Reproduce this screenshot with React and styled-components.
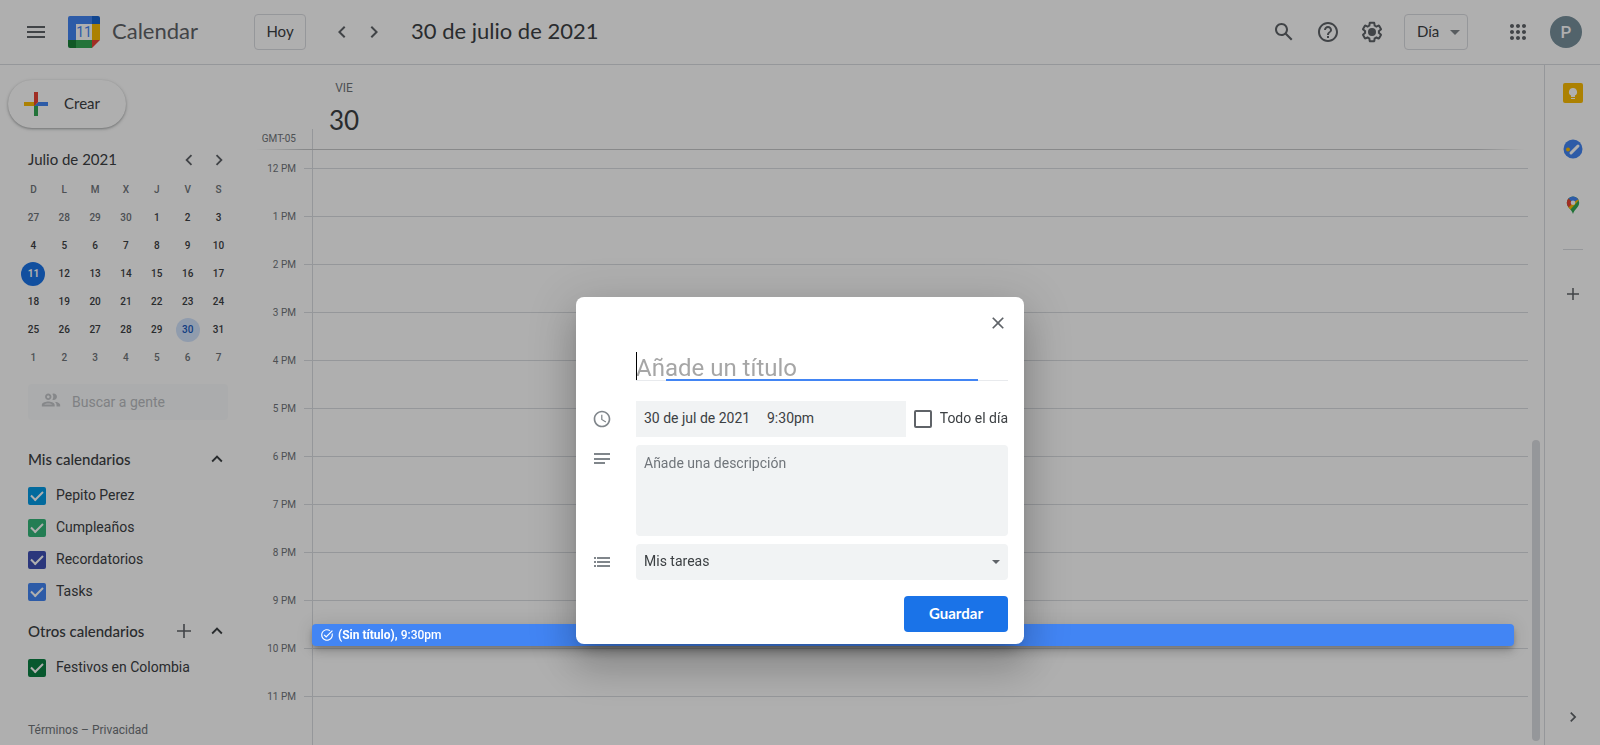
import React from "react";
import styled, { createGlobalStyle } from "styled-components";

const BRAND = `Lato, "Open Sans", sans-serif`;
const BODY = `Roboto, "Liberation Sans", sans-serif`;

const GlobalStyle = createGlobalStyle`
  *, *::before, *::after { box-sizing: border-box; }
  html, body { margin: 0; height: 100%; background: #fff; overflow: hidden; }
  #root { height: 100%; }
  body { font-family: ${BODY}; color: #3c4043; font-size: 14px; line-height: 20px; }
  button, input, textarea, select { font: inherit; color: inherit; }
  button { border: 0; background: none; padding: 0; cursor: pointer; }
`;

const Page = styled.div`
  display: flex;
  flex-direction: column;
  height: 100vh;
`;

const TopBar = styled.header`
  display: flex;
  align-items: center;
  flex: none;
  height: 65px;
  padding: 0 18px 1px 24px;
  border-bottom: 1px solid #dadce0;
  font-family: ${BRAND};
`;

const IconButton = styled.button`
  display: flex;
  align-items: center;
  justify-content: center;
  flex: none;
  width: ${(p) => p.$size || 24}px;
  height: ${(p) => p.$size || 24}px;
  color: ${(p) => p.$color || "#5f6368"};
`;

const Brand = styled.a`
  display: flex;
  align-items: center;
  gap: 12px;
  width: 186px;
  margin-left: 20px;
  color: #5f6368;
  font-size: 22px;
  line-height: 28px;
  text-decoration: none;
  span { padding-bottom: 2px; }
`;

const OutlineButton = styled.button`
  width: 52px;
  height: 36px;
  padding-bottom: 2px;
  border: 1px solid #dadce0;
  border-radius: 4px;
  font-size: 15px;
  font-family: ${BRAND};
  color: #3c4043;
`;

const Pager = styled.nav`
  display: flex;
  gap: ${(p) => p.$gap}px;
  margin-left: ${(p) => p.$left || 0}px;
`;

const DateTitle = styled.h1`
  flex: 1;
  margin: 0 0 0 25px;
  padding-bottom: 2px;
  font-size: 22px;
  line-height: 28px;
  font-weight: 400;
`;

const Tools = styled.div`
  display: flex;
  align-items: center;
  gap: 20px;
`;

const AppsSlot = styled.div`
  display: flex;
  align-items: center;
  gap: 20px;
  margin-left: 18px;
`;

const SelectWrap = styled.div`
  position: relative;
  flex: ${(p) => (p.$grow ? 1 : "none")};
  color: ${(p) => p.$arrow};
  svg {
    position: absolute;
    right: 8px;
    top: 50%;
    margin-top: -2px;
    pointer-events: none;
  }
`;

const ViewSelect = styled.select`
  display: block;
  width: 64px;
  height: 36px;
  padding: 0 0 2px 12px;
  border: 1px solid #dadce0;
  border-radius: 4px;
  background: transparent;
  color: #3c4043;
  font-family: ${BRAND};
  font-size: 15px;
  appearance: none;
`;

const Avatar = styled.button`
  width: 32px;
  height: 32px;
  border-radius: 50%;
  background: #78909c;
  color: #fff;
  font-family: ${BODY};
  font-size: 17px;
  font-weight: 500;
`;

const Columns = styled.div`
  display: flex;
  flex: 1;
  min-height: 0;
`;

const Sidebar = styled.aside`
  display: flex;
  flex-direction: column;
  flex: none;
  width: 256px;
  padding: 15px 27px 5px 28px;
`;

const CreateButton = styled.button`
  display: flex;
  align-items: center;
  flex: none;
  gap: 10px;
  width: 118px;
  height: 48px;
  margin-left: -20px;
  padding-left: 10px;
  border-radius: 24px;
  font-family: ${BRAND};
  font-size: 15px;
  box-shadow: 0 1px 2px 0 rgba(60, 64, 67, 0.3), 0 1px 3px 1px rgba(60, 64, 67, 0.15);
  svg { flex: none; }
  span { padding-bottom: 2px; }
`;

const SectionHead = styled.div`
  display: flex;
  align-items: center;
  flex: none;
  gap: 9px;
  height: 32px;
  margin-top: ${(p) => p.$top}px;
  margin-right: ${(p) => p.$outset || 0}px;
`;

const SectionTitle = styled.h2`
  flex: 1;
  margin: 0;
  padding-bottom: ${(p) => (p.$strong ? 0 : 2)}px;
  font-family: ${BRAND};
  font-size: 15px;
  line-height: 20px;
  font-weight: ${(p) => (p.$strong ? 500 : 400)};
  white-space: nowrap;
`;

const MonthTable = styled.table`
  width: 216px;
  margin: 0 0 0 -10px;
  flex: none;
  border-collapse: collapse;
  table-layout: fixed;
  font-size: 10px;
  line-height: 24px;
  text-align: center;
  th, td { height: 28px; padding: 2px 0; }
  th { color: #70757a; font-weight: 500; }
`;

const DayButton = styled.button`
  display: block;
  width: 24px;
  height: 24px;
  margin: 0 auto;
  border-radius: 50%;
  font-size: 10px;
  line-height: 24px;
  font-weight: ${(p) => (p.$kind === "today" ? 700 : 500)};
  background: ${(p) => ({ today: "#1a73e8", picked: "#d2e3fc" })[p.$kind] || "transparent"};
  color: ${(p) => ({ today: "#fff", picked: "#185abc", out: "#70757a" })[p.$kind] || "#3c4043"};
`;

const PeopleSearch = styled.label`
  display: flex;
  align-items: center;
  flex: none;
  gap: 10px;
  width: 200px;
  height: 36px;
  margin-top: 12px;
  padding: 0 8px 0 12px;
  border-radius: 4px;
  background: #fafbfc;
  color: #c4c6ca;
  svg { margin-top: -4px; flex: none; }
  input {
    width: 100%;
    min-width: 0;
    border: 0;
    padding: 0;
    background: transparent;
    outline: 0;
  }
  input::placeholder { color: #b9bcc0; opacity: 1; }
`;

const CalendarList = styled.ul`
  flex: none;
  margin: 5px 0 0;
  padding: 0;
  list-style: none;
`;

const CalendarRow = styled.label`
  display: flex;
  align-items: center;
  gap: 10px;
  height: 32px;
  span { margin-top: -2px; }
`;

const Check = styled.input`
  appearance: none;
  flex: none;
  width: 18px;
  height: 18px;
  margin: 0;
  border: 2px solid ${(p) => p.$color};
  border-radius: 2px;
  background: ${(p) => (p.$empty ? "transparent" : p.$color)};
  &:checked::after {
    content: "";
    display: block;
    width: 12px;
    height: 7px;
    margin: 2px 0 0 1px;
    border: solid #fff;
    border-width: 0 0 2px 2px;
    transform: rotate(-45deg);
  }
`;

const Legal = styled.footer`
  margin-top: auto;
  font-size: 12px;
  line-height: 20px;
  color: #70757a;
  a { color: inherit; text-decoration: none; }
`;

const DayView = styled.main`
  display: flex;
  flex-direction: column;
  flex: 1;
  min-width: 0;
`;

const DayHead = styled.div`
  display: flex;
  flex: none;
  height: 84px;
`;

const Zone = styled.div`
  display: flex;
  align-items: flex-end;
  justify-content: flex-end;
  width: 56px;
  padding-right: 16px;
  font-size: 10px;
  line-height: 20px;
  color: #70757a;
`;

const DayName = styled.div`
  width: 62px;
  padding-top: 13px;
  text-align: center;
  font-size: 12px;
  line-height: 20px;
  color: #70757a;
  strong {
    display: block;
    margin-top: 4px;
    font-family: ${BRAND};
    font-size: 26px;
    line-height: 36px;
    font-weight: 400;
    color: #3c4043;
  }
`;

const Tick = styled.div`
  align-self: flex-end;
  width: 1px;
  height: 20px;
  background: #dadce0;
`;

const HeadRule = styled.div`
  flex: none;
  height: 1px;
  margin-right: 20px;
  background: linear-gradient(to right, transparent, #c6c8ca 48px, #c6c8ca calc(100% - 48px), transparent);
`;

const GridArea = styled.div`
  display: flex;
  flex: 1;
  min-height: 0;
  overflow: hidden;
`;

const HourLabels = styled.div`
  flex: none;
  width: 40px;
  padding-top: 9px;
  font-size: 10px;
  line-height: 20px;
  text-align: right;
  color: #70757a;
  div { height: 48px; }
`;

const Lanes = styled.div`
  flex: 1;
  min-width: 0;
  display: flex;
  padding-left: 8px;
`;

const Stubs = styled.div`
  width: 8px;
  padding-top: 18px;
`;

const Lane = styled.div`
  position: relative;
  flex: 1;
  border-left: 1px solid #dadce0;
  padding-top: 18px;
`;

const HourSlot = styled.div`
  height: 48px;
  border-top: 1px solid #dadce0;
`;

const TaskChip = styled.button`
  position: absolute;
  z-index: 2;
  left: -1px;
  right: 14px;
  top: 474px;
  height: 22px;
  display: flex;
  align-items: center;
  gap: 4px;
  padding: 0 8px;
  border-radius: 4px;
  background: #4285f4;
  color: #fff;
  font-size: 12px;
  font-weight: 500;
  line-height: 16px;
  box-shadow: 0 6px 10px 0 rgba(0, 0, 0, 0.14), 0 1px 18px 0 rgba(0, 0, 0, 0.12), 0 3px 5px -1px rgba(0, 0, 0, 0.2);
  b { font-weight: 700; }
`;

const ScrollTrack = styled.div`
  display: flex;
  flex-direction: column;
  justify-content: flex-end;
  flex: none;
  width: 16px;
  padding: 0 4px 4px;
`;

const ScrollThumb = styled.div`
  height: 51%;
  border-radius: 4px;
  background: #dadce0;
`;

const AddOns = styled.aside`
  display: flex;
  flex-direction: column;
  align-items: center;
  flex: none;
  gap: 36px;
  width: 56px;
  padding: 18px 0;
  border-left: 1px solid #dadce0;
  > :last-child { margin-top: auto; }
`;

const AddOnRule = styled.hr`
  width: 20px;
  height: 1px;
  margin: -2px 0;
  border: 0;
  background: #dadce0;
`;

const Scrim = styled.div`
  position: fixed;
  inset: 0;
  z-index: 1;
  background: rgba(0, 0, 0, 0.315);
`;

const DialogLayer = styled.div`
  position: fixed;
  inset: 0;
  z-index: 3;
  display: flex;
  justify-content: center;
  align-items: flex-start;
  padding-top: 297px;
`;

const Dialog = styled.form`
  display: flex;
  flex-direction: column;
  gap: 8px;
  width: 448px;
  padding: 16px 16px 12px;
  border-radius: 8px;
  background: #fff;
  box-shadow: 0 24px 38px 3px rgba(0, 0, 0, 0.14), 0 9px 46px 8px rgba(0, 0, 0, 0.12),
    0 11px 15px -7px rgba(0, 0, 0, 0.2);
`;

const CloseRow = styled.div`
  display: flex;
  justify-content: flex-end;
  height: 31px;
`;

const TitleField = styled.div`
  position: relative;
  height: 29px;
  margin: 0 0 12px 44px;
  border-bottom: 1px solid #e8eaed;
  &::before {
    content: "";
    position: absolute;
    left: 0;
    top: 0;
    width: 1px;
    height: 28px;
    background: #000;
  }
  &::after {
    content: "";
    position: absolute;
    left: 8%;
    right: 8%;
    bottom: -1px;
    height: 2px;
    background: #4285f4;
  }
  input {
    display: block;
    width: 100%;
    height: 29px;
    padding: 2px 0 0;
    border: 0;
    outline: 0;
    background: transparent;
    font-size: 24px;
    line-height: 28px;
  }
  input::placeholder { color: #a6a6a6; opacity: 1; }
`;

const FieldRow = styled.div`
  display: flex;
  align-items: ${(p) => (p.$top ? "flex-start" : "center")};
  gap: 24px;
  > svg { flex: none; width: 20px; color: #80868b; ${(p) => p.$top && "margin-top: 4px;"} }
`;

const FieldBody = styled.div`
  display: flex;
  align-items: center;
  flex: 1;
  min-width: 0;
`;

const WhenBox = styled.div`
  display: flex;
  flex: 1;
  height: 36px;
  padding-left: 8px;
  gap: 18px;
  background: #f1f3f4;
  input {
    width: 105px;
    padding: 0 0 2px;
    border: 0;
    background: transparent;
    outline: 0;
  }
`;

const AllDay = styled.label`
  display: flex;
  align-items: center;
  gap: 8px;
  margin-left: 8px;
  span { padding-bottom: 2px; }
`;

const Description = styled.textarea`
  flex: 1;
  display: block;
  min-width: 0;
  height: 91px;
  padding: 8px;
  border: 0;
  border-radius: 4px;
  outline: 0;
  resize: none;
  background: #f1f3f4;
  &::placeholder { color: #70757a; opacity: 1; }
`;

const ListSelect = styled.select`
  display: block;
  width: 100%;
  height: 36px;
  padding: 0 8px 2px;
  border: 0;
  border-radius: 4px;
  background: #f1f3f4;
  color: #3c4043;
  appearance: none;
`;

const SaveButton = styled.button`
  align-self: flex-end;
  width: 104px;
  height: 36px;
  margin-top: 8px;
  padding-bottom: 2px;
  border-radius: 4px;
  background: #1a73e8;
  color: #fff;
  font-family: ${BRAND};
  font-size: 15px;
  font-weight: 700;
`;

const Glyph = ({ d, size = 24 }) => (
  <svg width={size} height={size} viewBox="0 0 24 24" fill="currentColor" aria-hidden="true">
    <path d={d} />
  </svg>
);

const Arrow = ({ size }) => (
  <svg width={size} height={size / 2} viewBox="0 0 10 5" fill="currentColor" aria-hidden="true">
    <path d="M0 0h10L5 5z" />
  </svg>
);

const PATHS = {
  menu: "M3 18h18v-2H3v2zm0-5h18v-2H3v2zm0-7v2h18V6H3z",
  left: "M15.41 7.41L14 6l-6 6 6 6 1.41-1.41L10.83 12z",
  right: "M10 6L8.59 7.41 13.17 12l-4.58 4.59L10 18l6-6z",
  up: "M12 8l-6 6 1.41 1.41L12 10.83l4.59 4.58L18 14z",
  search:
    "M20.49 19l-5.73-5.73C15.53 12.2 16 10.91 16 9.5 16 5.91 13.09 3 9.5 3S3 5.91 3 9.5 5.91 16 9.5 16c1.41 0 2.7-.47 3.77-1.24L19 20.49 20.49 19zM5 9.5C5 7.01 7.01 5 9.5 5S14 7.01 14 9.5 11.99 14 9.5 14 5 11.99 5 9.5z",
  help: "M11 18h2v-2h-2v2zm1-16C6.48 2 2 6.48 2 12s4.48 10 10 10 10-4.48 10-10S17.52 2 12 2zm0 18c-4.41 0-8-3.59-8-8s3.59-8 8-8 8 3.59 8 8-3.59 8-8 8zm0-14c-2.21 0-4 1.79-4 4h2c0-1.1.9-2 2-2s2 .9 2 2c0 2-3 1.75-3 5h2c0-2.25 3-2.5 3-5 0-2.21-1.79-4-4-4z",
  apps: "M6 8c1.1 0 2-.9 2-2s-.9-2-2-2-2 .9-2 2 .9 2 2 2zm6 12c1.1 0 2-.9 2-2s-.9-2-2-2-2 .9-2 2 .9 2 2 2zm-6 0c1.1 0 2-.9 2-2s-.9-2-2-2-2 .9-2 2 .9 2 2 2zm0-6c1.1 0 2-.9 2-2s-.9-2-2-2-2 .9-2 2 .9 2 2 2zm6 0c1.1 0 2-.9 2-2s-.9-2-2-2-2 .9-2 2 .9 2 2 2zm4-8c0 1.1.9 2 2 2s2-.9 2-2-.9-2-2-2-2 .9-2 2zm-4 2c1.1 0 2-.9 2-2s-.9-2-2-2-2 .9-2 2 .9 2 2 2zm6 6c1.1 0 2-.9 2-2s-.9-2-2-2-2 .9-2 2 .9 2 2 2zm0 6c1.1 0 2-.9 2-2s-.9-2-2-2-2 .9-2 2 .9 2 2 2z",
  people:
    "M9 13.75c-2.34 0-7 1.17-7 3.5V19h14v-1.75c0-2.33-4.66-3.5-7-3.5zM4.34 17c.84-.58 2.87-1.25 4.66-1.25s3.82.67 4.66 1.25H4.34zM9 12c1.93 0 3.5-1.57 3.5-3.5S10.93 5 9 5 5.5 6.57 5.5 8.5 7.07 12 9 12zm0-5c.83 0 1.5.67 1.5 1.5S9.83 10 9 10s-1.5-.67-1.5-1.5S8.17 7 9 7zm7.04 6.81c1.16.84 1.96 1.96 1.96 3.44V19h4v-1.75c0-2.02-3.5-3.17-5.96-3.44zM15 12c1.93 0 3.5-1.57 3.5-3.5S16.93 5 15 5c-.54 0-1.04.13-1.5.35.63.89 1 1.98 1 3.15s-.37 2.26-1 3.15c.46.22.96.35 1.5.35z",
  plus: "M20 13h-7v7h-2v-7H4v-2h7V4h2v7h7v2z",
  thinPlus: "M19 12.8h-6.2V19h-1.6v-6.2H5v-1.6h6.2V5h1.6v6.2H19z",
  close: "M19 6.41L17.59 5 12 10.59 6.41 5 5 6.41 10.59 12 5 17.59 6.41 19 12 13.41 17.59 19 19 17.59 13.41 12z",
  clock:
    "M11.99 2C6.47 2 2 6.48 2 12s4.47 10 9.99 10C17.52 22 22 17.52 22 12S17.52 2 11.99 2zM12 20c-4.42 0-8-3.58-8-8s3.58-8 8-8 8 3.58 8 8-3.58 8-8 8zm.5-13H11v6l5.25 3.15.75-1.23-4.5-2.67z",
  doneRing:
    "M22 5.18L10.59 16.6l-4.24-4.24 1.41-1.41 2.83 2.83 10-10L22 5.18zm-2.21 5.04c.13.57.21 1.17.21 1.78 0 4.42-3.58 8-8 8s-8-3.58-8-8 3.58-8 8-8c1.58 0 3.04.46 4.28 1.25l1.44-1.44C16.1 2.67 14.13 2 12 2 6.48 2 2 6.48 2 12s4.48 10 10 10 10-4.48 10-10c0-1.19-.22-2.33-.6-3.39l-1.61 1.61z",
  gear: "M13.85 22.25h-3.7c-.74 0-1.36-.54-1.45-1.27l-.27-1.89c-.27-.14-.53-.29-.79-.46l-1.8.72c-.7.26-1.47-.03-1.81-.65L2.2 15.53c-.35-.66-.2-1.44.36-1.88l1.53-1.19c-.01-.15-.02-.3-.02-.46 0-.15.01-.31.02-.46l-1.52-1.19c-.59-.45-.74-1.26-.37-1.88l1.85-3.19c.34-.62 1.11-.9 1.79-.63l1.81.73c.26-.17.52-.32.78-.46l.27-1.91c.09-.7.71-1.25 1.44-1.25h3.7c.74 0 1.36.54 1.45 1.27l.27 1.89c.27.14.53.29.79.46l1.8-.72c.71-.26 1.48.03 1.82.65l1.84 3.18c.36.66.2 1.44-.36 1.88l-1.52 1.19c.01.15.02.3.02.46s-.01.31-.02.46l1.52 1.19c.56.45.72 1.23.37 1.86l-1.86 3.22c-.34.62-1.11.9-1.8.63l-1.8-.72c-.26.17-.52.32-.78.46l-.27 1.91c-.1.68-.72 1.22-1.46 1.22zm-3.23-2h2.76l.37-2.55.53-.22c.44-.18.88-.44 1.34-.78l.45-.34 2.38.96 1.38-2.4-2.03-1.58.07-.56c.03-.26.06-.51.06-.78s-.03-.53-.06-.78l-.07-.56 2.03-1.58-1.39-2.4-2.39.96-.45-.35c-.42-.32-.87-.58-1.33-.77l-.52-.22-.37-2.55h-2.76l-.37 2.55-.53.21c-.44.19-.88.44-1.34.79l-.45.33-2.38-.95-1.39 2.39 2.03 1.58-.07.56a7 7 0 0 0-.06.79c0 .26.02.53.06.78l.07.56-2.03 1.58 1.38 2.4 2.39-.96.45.35c.43.33.86.58 1.33.77l.53.22.38 2.55z M12 8a4 4 0 1 0 0 8 4 4 0 0 0 0-8z",
};

const CalendarLogo = () => (
  <svg width="32" height="32" viewBox="0 0 32 32" aria-hidden="true">
    <path d="M2 0h22v8H8v16H0V2a2 2 0 0 1 2-2z" fill="#4285f4" />
    <path d="M24 0h6a2 2 0 0 1 2 2v6h-8z" fill="#1967d2" />
    <path d="M24 8h8v16h-8z" fill="#fbbc04" />
    <path d="M8 24h16v8H8z" fill="#34a853" />
    <path d="M0 24h8v8H2a2 2 0 0 1-2-2z" fill="#188038" />
    <path d="M24 24h8l-8 8z" fill="#ea4335" />
    <path d="M8 8h16v16H8z" fill="#fff" />
    <text x="16" y="21" textAnchor="middle" fontFamily="Roboto, sans-serif" fontSize="14" fill="#4285f4">
      11
    </text>
  </svg>
);

const CreateIcon = () => (
  <svg width="36" height="36" viewBox="0 0 36 36" aria-hidden="true">
    <path fill="#34a853" d="M16 16v14h4V20z" />
    <path fill="#4285f4" d="M30 16H20l-4 4h14z" />
    <path fill="#fbbc05" d="M6 16v4h10l4-4z" />
    <path fill="#ea4335" d="M20 16V6h-4v14z" />
  </svg>
);

const KeepIcon = () => (
  <svg width="20" height="20" viewBox="0 0 20 20" aria-hidden="true">
    <rect width="20" height="20" rx="2" fill="#fbbc04" />
    <path d="M10 5a4 4 0 0 0-2 7.5V14h4v-1.5A4 4 0 0 0 10 5z" fill="#fff" />
    <path d="M8 15h4v1H8z" fill="#fff" />
  </svg>
);

const TasksIcon = () => (
  <svg width="20" height="20" viewBox="0 0 20 20" aria-hidden="true">
    <circle cx="10" cy="10" r="9.5" fill="#4285f4" />
    <path d="M8 14l7-7" stroke="#fff" strokeWidth="3" strokeLinecap="round" />
    <circle cx="5" cy="10.5" r="2" fill="#fbbc04" />
  </svg>
);

const MapsIcon = () => (
  <svg width="20" height="20" viewBox="0 0 20 20" aria-hidden="true">
    <clipPath id="pin">
      <path d="M10 1.500a6.200 6.200 0 0 0-6.200 6.200c0 4.500 4.700 6.200 6.200 11.300 1.500-5.100 6.200-6.800 6.200-11.300A6.200 6.200 0 0 0 10 1.500z" />
    </clipPath>
    <g clipPath="url(#pin)">
      <path d="M0 0h20v20H0z" fill="#34a853" />
      <path d="M17 0L3 13l4 2 10-11z" fill="#fbbc04" />
      <path d="M6 0h12v4l-4 1-4 3-5-5z" fill="#4285f4" />
      <path d="M10 8L5 3 2 4v5l3 4z" fill="#ea4335" />
    </g>
    <circle cx="10" cy="7.700" r="2.300" fill="#fff" />
  </svg>
);

const NotesIcon = () => (
  <svg width="20" height="20" viewBox="0 0 20 20" fill="currentColor" aria-hidden="true">
    <path d="M2 4h16v2H2zM2 9h16v2H2zM2 13h11v2H2z" />
  </svg>
);

const ListIcon = () => (
  <svg width="20" height="20" viewBox="0 0 20 20" fill="currentColor" aria-hidden="true">
    <path d="M2 5h2v2H2zM5 5h13v2H5zM2 9h2v2H2zM5 9h13v2H5zM2 13h2v2H2zM5 13h13v2H5z" />
  </svg>
);

const WEEKDAYS = ["D", "L", "M", "X", "J", "V", "S"];
const DAYS = [27, 28, 29, 30, ...Array.from({ length: 31 }, (_, i) => i + 1), 1, 2, 3, 4, 5, 6, 7];
const WEEKS = Array.from({ length: 6 }, (_, w) => DAYS.slice(w * 7, w * 7 + 7));
const HOURS = ["12 PM", ...Array.from({ length: 11 }, (_, i) => `${i + 1} PM`)];
const MINE = [
  ["Pepito Perez", "#039be5"],
  ["Cumpleaños", "#33b679"],
  ["Recordatorios", "#3f51b5"],
  ["Tasks", "#4285f4"],
];
const OTHERS = [["Festivos en Colombia", "#0b8043"]];

const dayKind = (index) => {
  if (index < 4 || index > 34) return "out";
  if (index === 14) return "today";
  if (index === 33) return "picked";
  return "in";
};

const Calendars = ({ items }) => (
  <CalendarList>
    {items.map(([name, color]) => (
      <li key={name}>
        <CalendarRow>
          <Check type="checkbox" defaultChecked $color={color} />
          <span>{name}</span>
        </CalendarRow>
      </li>
    ))}
  </CalendarList>
);

export default function App() {
  return (
    <Page>
      <GlobalStyle />
      <TopBar>
        <IconButton aria-label="Menú principal"><Glyph d={PATHS.menu} /></IconButton>
        <Brand href="#"><CalendarLogo /><span>Calendar</span></Brand>
        <OutlineButton>Hoy</OutlineButton>
        <Pager $gap={8} $left={24}>
          <IconButton aria-label="Día anterior"><Glyph d={PATHS.left} /></IconButton>
          <IconButton aria-label="Día siguiente"><Glyph d={PATHS.right} /></IconButton>
        </Pager>
        <DateTitle>30 de julio de 2021</DateTitle>
        <Tools>
          <IconButton aria-label="Buscar"><Glyph d={PATHS.search} /></IconButton>
          <IconButton aria-label="Ayuda"><Glyph d={PATHS.help} /></IconButton>
          <IconButton aria-label="Configuración"><Glyph d={PATHS.gear} /></IconButton>
          <SelectWrap $arrow="#80868b">
            <ViewSelect aria-label="Vista" defaultValue="dia">
              <option value="dia">Día</option>
            </ViewSelect>
            <Arrow size={10} />
          </SelectWrap>
          <AppsSlot>
            <IconButton aria-label="Aplicaciones"><Glyph d={PATHS.apps} /></IconButton>
            <Avatar aria-label="Cuenta">P</Avatar>
          </AppsSlot>
        </Tools>
      </TopBar>

      <Columns>
        <Sidebar>
          <CreateButton><CreateIcon /><span>Crear</span></CreateButton>
          <SectionHead $top={16} $outset={-2}>
            <SectionTitle>Julio de 2021</SectionTitle>
            <Pager $gap={6}>
              <IconButton aria-label="Mes anterior"><Glyph d={PATHS.left} size={22} /></IconButton>
              <IconButton aria-label="Mes siguiente"><Glyph d={PATHS.right} size={22} /></IconButton>
            </Pager>
          </SectionHead>
          <MonthTable>
            <thead>
              <tr>{WEEKDAYS.map((d) => <th key={d}>{d}</th>)}</tr>
            </thead>
            <tbody>
              {WEEKS.map((week, w) => (
                <tr key={w}>
                  {week.map((day, i) => (
                    <td key={i}><DayButton $kind={dayKind(w * 7 + i)}>{day}</DayButton></td>
                  ))}
                </tr>
              ))}
            </tbody>
          </MonthTable>
          <PeopleSearch>
            <Glyph d={PATHS.people} size={22} />
            <input aria-label="Buscar a gente" placeholder="Buscar a gente" />
          </PeopleSearch>
          <SectionHead $top={23}>
            <SectionTitle $strong>Mis calendarios</SectionTitle>
            <IconButton $color="#3c4043" aria-label="Contraer mis calendarios"><Glyph d={PATHS.up} size={22} /></IconButton>
          </SectionHead>
          <Calendars items={MINE} />
          <SectionHead $top={7}>
            <SectionTitle $strong>Otros calendarios</SectionTitle>
            <IconButton aria-label="Añadir otros calendarios"><Glyph d={PATHS.thinPlus} /></IconButton>
            <IconButton $color="#3c4043" aria-label="Contraer otros calendarios"><Glyph d={PATHS.up} size={22} /></IconButton>
          </SectionHead>
          <Calendars items={OTHERS} />
          <Legal><a href="#">Términos</a> – <a href="#">Privacidad</a></Legal>
        </Sidebar>

        <DayView>
          <DayHead>
            <Zone>GMT-05</Zone>
            <Tick />
            <DayName>VIE<strong>30</strong></DayName>
          </DayHead>
          <HeadRule />
          <GridArea>
            <HourLabels>{HOURS.map((h) => <div key={h}>{h}</div>)}</HourLabels>
            <Lanes>
              <Stubs>{HOURS.map((h) => <HourSlot key={h} />)}</Stubs>
              <Lane>
                {HOURS.map((h) => <HourSlot key={h} />)}
                <TaskChip>
                  <Glyph d={PATHS.doneRing} size={14} />
                  <span><b>(Sin título),</b> 9:30pm</span>
                </TaskChip>
              </Lane>
            </Lanes>
            <ScrollTrack><ScrollThumb /></ScrollTrack>
          </GridArea>
        </DayView>

        <AddOns>
          <IconButton $size={20} aria-label="Keep"><KeepIcon /></IconButton>
          <IconButton $size={20} aria-label="Tasks"><TasksIcon /></IconButton>
          <IconButton $size={20} aria-label="Maps"><MapsIcon /></IconButton>
          <AddOnRule />
          <IconButton $size={20} aria-label="Descargar complementos"><Glyph d={PATHS.plus} size={18} /></IconButton>
          <IconButton $size={20} aria-label="Ocultar panel lateral"><Glyph d={PATHS.right} size={20} /></IconButton>
        </AddOns>
      </Columns>

      <Scrim />
      <DialogLayer>
        <Dialog role="dialog" aria-label="Nueva tarea" onSubmit={(e) => e.preventDefault()}>
          <CloseRow>
            <IconButton type="button" $size={20} aria-label="Cerrar"><Glyph d={PATHS.close} size={20} /></IconButton>
          </CloseRow>
          <TitleField>
            <input aria-label="Título" placeholder="Añade un título" />
          </TitleField>
          <FieldRow>
            <Glyph d={PATHS.clock} size={20} />
            <FieldBody>
              <WhenBox>
                <input aria-label="Fecha" defaultValue="30 de jul de 2021" />
                <input aria-label="Hora" defaultValue="9:30pm" />
              </WhenBox>
              <AllDay>
                <Check type="checkbox" $color="#5f6368" $empty />
                <span>Todo el día</span>
              </AllDay>
            </FieldBody>
          </FieldRow>
          <FieldRow $top>
            <NotesIcon />
            <Description aria-label="Descripción" placeholder="Añade una descripción" />
          </FieldRow>
          <FieldRow>
            <ListIcon />
            <SelectWrap $arrow="#5f6368" $grow>
              <ListSelect aria-label="Lista" defaultValue="mis">
                <option value="mis">Mis tareas</option>
              </ListSelect>
              <Arrow size={8} />
            </SelectWrap>
          </FieldRow>
          <SaveButton>Guardar</SaveButton>
        </Dialog>
      </DialogLayer>
    </Page>
  );
}
